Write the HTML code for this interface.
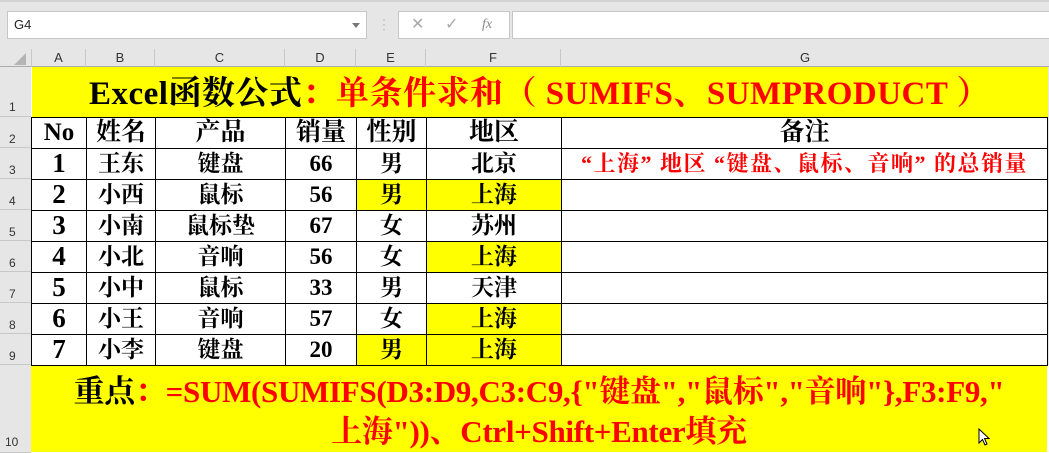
<!DOCTYPE html>
<html><head><meta charset="utf-8"><style>
*{margin:0;padding:0;box-sizing:border-box}
body{width:1049px;height:453px;overflow:hidden;background:#e6e6e6;position:relative;font-family:"Liberation Sans",sans-serif}
.a{position:absolute}
.ser{font-family:"Liberation Serif","Noto Serif CJK SC",serif;font-weight:bold}
table{position:absolute;left:31px;top:67px;border-collapse:collapse;table-layout:fixed;background:#fff}
td{border:1px solid #000;text-align:center;font-family:"Liberation Serif","Noto Serif CJK SC",serif;font-weight:bold;font-size:23px;line-height:1;padding:0;overflow:hidden;white-space:nowrap;color:#000;background:#fff}
td.y{background:#ff0}
.r{color:#f00}
.n{font-size:27px}
.ch{position:absolute;top:49px;height:18px;font-size:13px;color:#333;text-align:center;line-height:18px;border-right:1px solid #c8c8c8}
.rh{position:absolute;left:0;width:31px;font-size:12px;color:#333;padding-left:9px;border-bottom:1px solid #c8c8c8;background:#e6e6e6}
</style></head><body>
<div class="a" style="left:0;top:0;width:1049px;height:2px;background:#d4d4d4"></div>
<div class="a" style="left:7px;top:11px;width:360px;height:28px;background:#fff;border:1px solid #c6c6c6;font-size:13px;line-height:26px;padding-left:6px;color:#222">G4</div>
<div class="a" style="left:352px;top:23px;width:0;height:0;border-left:4px solid transparent;border-right:4px solid transparent;border-top:5px solid #777"></div>
<div class="a" style="left:382px;top:17px;color:#aaa;font-size:12px;line-height:5px">·<br>·<br>·</div>
<div class="a" style="left:398px;top:11px;width:112px;height:28px;background:#fff;border:1px solid #c6c6c6;color:#aaa;font-size:16px;line-height:26px">
<span style="position:absolute;left:12px">✕</span><span style="position:absolute;left:46px">✓</span><span style="position:absolute;left:83px;font-family:'Liberation Serif';font-style:italic;font-size:14px;color:#888">fx</span></div>
<div class="a" style="left:512px;top:11px;width:537px;height:28px;background:#fff;border:1px solid #c6c6c6;border-right:none"></div>
<div class="a" style="left:0;top:49px;width:1049px;height:18px;background:#e6e6e6;border-bottom:1px solid #ababab"></div>
<div class="a" style="left:14px;top:53px;width:0;height:0;border-left:12px solid transparent;border-bottom:12px solid #b4b4b4"></div>
<div class="ch" style="left:31px;width:55px;border-left:1px solid #c8c8c8">A</div>
<div class="ch" style="left:86px;width:69px">B</div>
<div class="ch" style="left:155px;width:130px">C</div>
<div class="ch" style="left:285px;width:71px">D</div>
<div class="ch" style="left:356px;width:70px">E</div>
<div class="ch" style="left:426px;width:135px">F</div>
<div class="ch" style="left:561px;width:488px;border-right:none">G</div>
<div class="rh" style="top:67px;height:50px;padding-top:33px">1</div>
<div class="rh" style="top:117px;height:31px;padding-top:15px">2</div>
<div class="rh" style="top:148px;height:31px;padding-top:15px">3</div>
<div class="rh" style="top:179px;height:31px;padding-top:15px">4</div>
<div class="rh" style="top:210px;height:31px;padding-top:15px">5</div>
<div class="rh" style="top:241px;height:31px;padding-top:15px">6</div>
<div class="rh" style="top:272px;height:31px;padding-top:15px">7</div>
<div class="rh" style="top:303px;height:31px;padding-top:15px">8</div>
<div class="rh" style="top:334px;height:31px;padding-top:15px">9</div>
<div class="rh" style="top:365px;height:88px;padding-top:70px;padding-left:5px">10</div>
<div class="a" style="left:31px;top:365px;width:1018px;height:88px;background:#fff"></div>
<table>
<colgroup><col style="width:55px"><col style="width:69px"><col style="width:130px"><col style="width:71px"><col style="width:70px"><col style="width:135px"><col style="width:486px"></colgroup>
<tr style="height:50px"><td colspan="7" class="y" style="font-size:33px;border:none;border-bottom:1px solid #000;padding-top:6px;letter-spacing:0.5px">Excel函数公式<span class="r">：单条件求和（ SUMIFS、SUMPRODUCT ）</span></td></tr>
<tr style="height:31px"><td style="font-size:25px">No</td><td style="font-size:25px">姓名</td><td style="font-size:25px">产品</td><td style="font-size:25px">销量</td><td style="font-size:25px">性别</td><td style="font-size:25px">地区</td><td style="font-size:25px">备注</td></tr>
<tr style="height:31px"><td class="n">1</td><td>王东</td><td>键盘</td><td>66</td><td>男</td><td>北京</td><td class="r" style="font-size:22px;letter-spacing:1.5px">“上海” 地区 “键盘、鼠标、音响” 的总销量</td></tr>
<tr style="height:31px"><td class="n">2</td><td>小西</td><td>鼠标</td><td>56</td><td class="y">男</td><td class="y">上海</td><td></td></tr>
<tr style="height:31px"><td class="n">3</td><td>小南</td><td>鼠标垫</td><td>67</td><td>女</td><td>苏州</td><td></td></tr>
<tr style="height:31px"><td class="n">4</td><td>小北</td><td>音响</td><td>56</td><td>女</td><td class="y">上海</td><td></td></tr>
<tr style="height:31px"><td class="n">5</td><td>小中</td><td>鼠标</td><td>33</td><td>男</td><td>天津</td><td></td></tr>
<tr style="height:31px"><td class="n">6</td><td>小王</td><td>音响</td><td>57</td><td>女</td><td class="y">上海</td><td></td></tr>
<tr style="height:31px"><td class="n">7</td><td>小李</td><td>键盘</td><td>20</td><td class="y">男</td><td class="y">上海</td><td></td></tr>
</table>
<div class="a ser" style="left:31px;top:366px;width:1016px;height:86px;background:#ff0;font-size:31px;line-height:40px;text-align:center;padding-top:6px;color:#f00;letter-spacing:-0.3px;white-space:nowrap"><span style="color:#000">重点</span>：=SUM(SUMIFS(D3:D9,C3:C9,{"键盘","鼠标","音响"},F3:F9,"<br>上海"))、Ctrl+Shift+Enter填充</div>
<svg class="a" style="left:978px;top:428px" width="14" height="20" viewBox="0 0 14 20"><path d="M1 1 L1 15 L4.5 11.5 L7 17 L9 16 L6.5 10.5 L11 10.5 Z" fill="#fff" stroke="#000" stroke-width="1"/></svg>
</body></html>
